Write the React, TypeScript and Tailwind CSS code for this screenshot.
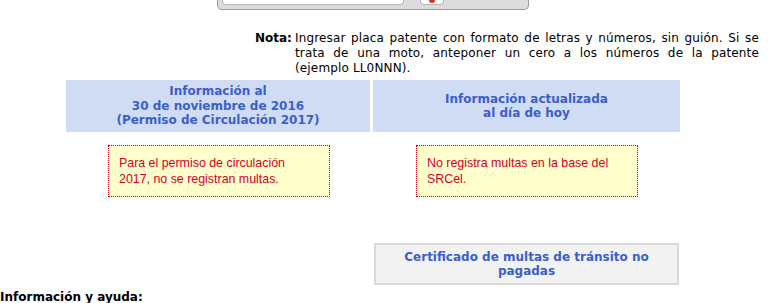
export default function App() {
  const verdana = { fontFamily: '"DejaVu Sans", Verdana, sans-serif' };
  return (
    <div className="relative w-[784px] h-[303px] overflow-hidden bg-white text-black" style={verdana}>
      {/* top search box remnant */}
      <div className="ml-[217px] w-[312px] h-[10px] bg-[#dcdcdc] border border-t-0 border-[#9a9a9a] rounded-b-[5px] flex items-start">
        <div className="ml-[4px] w-[182px] h-[5px] bg-white border border-t-0 border-[#b5b5b5] rounded-b-[4px]" />
        <div className="ml-[16px] w-[24px] h-[5px] bg-white border border-t-0 border-[#b5b5b5] rounded-b-[4px] flex justify-center">
          <div className="w-[6px] h-[3px] bg-[#d0302a] rounded-b-full" />
        </div>
      </div>

      {/* Nota */}
      <div className="mt-[21px] ml-[255px] w-[504px] flex text-[12px] leading-[15px]">
        <div className="w-[40px] font-bold shrink-0">Nota:</div>
        <div className="flex-1 text-justify tracking-[0.15px]">
          Ingresar placa patente con formato de letras y números, sin guión. Si se trata de una moto, anteponer un cero a los números de la patente (ejemplo LL0NNN).
        </div>
      </div>

      {/* headers */}
      <div className="mt-[4px] ml-[66px] flex gap-[3px]">
        <div className="w-[304px] h-[52px] bg-[#d0dcf3] flex items-center justify-center text-center text-[12px] leading-[14.5px] font-bold text-[#3b5fc8]">
          <div>
            Información al<br />30 de noviembre de 2016<br />(Permiso de Circulación 2017)
          </div>
        </div>
        <div className="w-[307px] h-[52px] bg-[#d0dcf3] flex items-center justify-center text-center text-[12px] leading-[14px] font-bold text-[#3b5fc8]">
          <div>
            Información actualizada<br />al día de hoy
          </div>
        </div>
      </div>

      {/* red notes */}
      <div className="mt-[13px] ml-[108px] flex" style={{ fontFamily: '"Liberation Sans", Arial, sans-serif' }}>
        <div className="w-[222px] h-[52px] bg-[#ffffcc] border border-dotted border-[#cc0000] pl-[10px] pr-[16px] pt-[9px] text-[12.4px] leading-[16px] text-[#d4002a]">
          Para el permiso de circulación 2017, no se registran multas.
        </div>
        <div className="ml-[86px] w-[222px] h-[52px] bg-[#ffffcc] border border-dotted border-[#cc0000] pl-[10px] pr-[16px] pt-[9px] text-[12.4px] leading-[16px] text-[#d4002a]">
          No registra multas en la base del SRCel.
        </div>
      </div>

      {/* certificate */}
      <div className="mt-[46px] ml-[374px] w-[305px] h-[42px] bg-[#f2f2f2] border-2 border-[#d9d9d9] flex items-center justify-center text-center text-[12px] leading-[14px] font-bold text-[#3b5fc8]">
        <div>
          Certificado de multas de tránsito no<br />pagadas
        </div>
      </div>

      <div className="mt-[5px] text-[12px] leading-[14px] font-bold">Información y ayuda:</div>
    </div>
  );
}
